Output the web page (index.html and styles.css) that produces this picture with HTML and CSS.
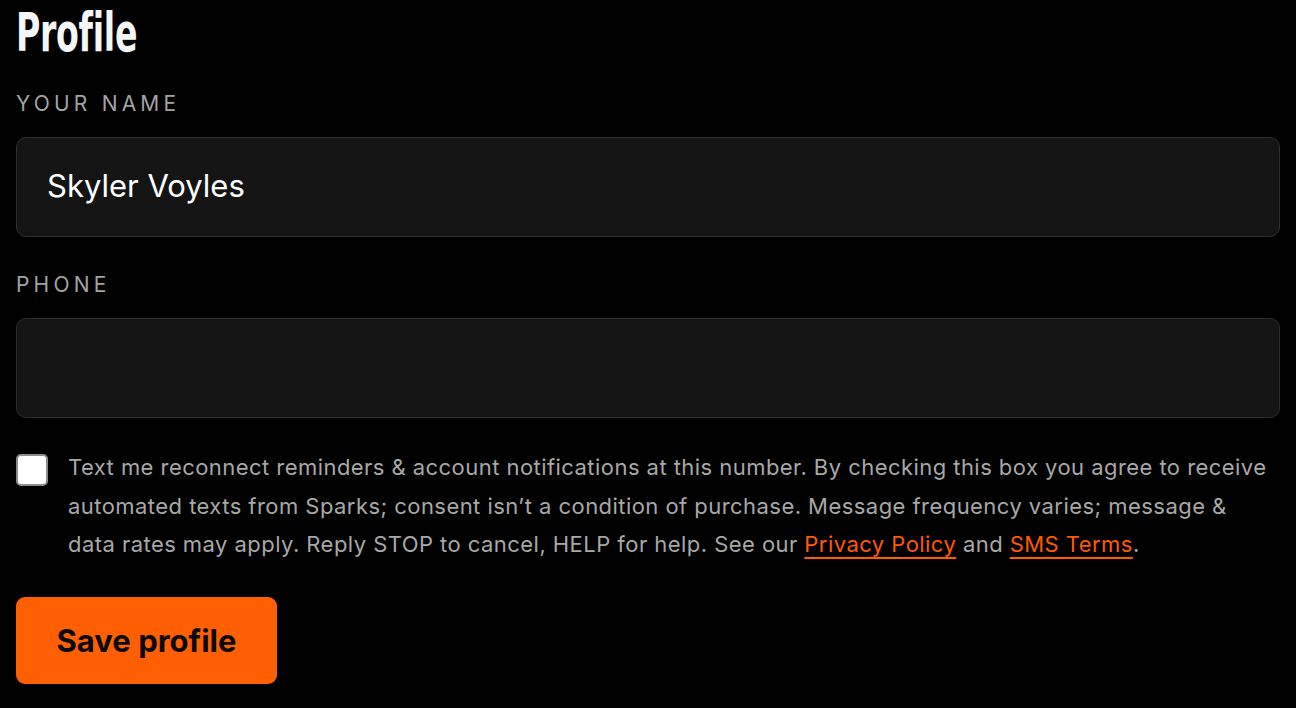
FILE: index.html
```html
<!DOCTYPE html>
<html lang="en">
<head>
<meta charset="utf-8">
<title>Profile</title>
<link rel="stylesheet" href="styles.css">
</head>
<body>
<main class="page">
  <h1 class="title"><span class="title-text">Profile</span></h1>
  <form class="form">
    <div class="field">
      <label class="label" for="name">Your name</label>
      <input class="input" id="name" type="text" value="Skyler Voyles">
    </div>
    <div class="field field--last">
      <label class="label" for="phone">Phone</label>
      <input class="input" id="phone" type="tel" value="">
    </div>
    <div class="consent">
      <input class="check" type="checkbox" id="sms">
      <label class="consent-text" for="sms">Text me reconnect reminders &amp; account notifications at this number. By checking this box you agree to receive automated texts from Sparks; consent isn’t a condition of purchase. Message frequency varies; message &amp; data rates may apply. Reply STOP to cancel, HELP for help. See our <a class="link" href="#">Privacy Policy</a> and <a class="link" href="#">SMS Terms</a>.</label>
    </div>
    <div class="actions">
      <button class="btn" type="button">Save profile</button>
    </div>
  </form>
</main>
</body>
</html>
```
FILE: styles.css
```css
html, body {
  margin: 0;
  padding: 0;
  background: #000;
}
body {
  font-family: Inter, "Liberation Sans", Arial, sans-serif;
  color: #fff;
}
.page {
  padding: 6px 16px 0 16px;
}
.title {
  margin: 0;
  font-family: "DejaVu Sans", "Liberation Sans", sans-serif;
  font-weight: 700;
  font-size: 54px;
  line-height: 54px;
  color: #f4f6f8;
}
.title-text {
  display: inline-block;
  transform: scaleX(0.615);
  transform-origin: 0 50%;
  letter-spacing: -0.5px;
}
.form {
  display: flex;
  flex-direction: column;
  margin-top: 32px;
}
.field {
  display: flex;
  flex-direction: column;
  gap: 21px;
  margin-bottom: 36px;
}
.field--last {
  margin-bottom: 30px;
}
.label {
  display: block;
  font-size: 21px;
  line-height: 24px;
  letter-spacing: 0.2em;
  text-transform: uppercase;
  color: #a3a3a3;
}
.input {
  box-sizing: border-box;
  width: 100%;
  height: 100px;
  margin: 0;
  padding: 0 30px 3px 30px;
  background: #141414;
  border: 1.5px solid #2f2f2f;
  border-radius: 10px;
  font-family: Inter, "Liberation Sans", sans-serif;
  font-size: 31px;
  color: #fff;
  outline: none;
}
.consent {
  display: flex;
  align-items: flex-start;
  gap: 20px;
}
.check {
  appearance: none;
  -webkit-appearance: none;
  flex: none;
  box-sizing: border-box;
  width: 32px;
  height: 32px;
  margin: 6px 0 0 0;
  background: #fff;
  border: 2px solid #8d8d8d;
  border-radius: 5px;
}
.consent-text {
  font-size: 22px;
  line-height: 38.5px;
  letter-spacing: 0.45px;
  color: #a8a8a8;
}
.link {
  color: #ff5a00;
  text-decoration: underline;
  text-decoration-thickness: 2px;
  text-underline-offset: 5px;
}
.actions {
  margin-top: 33px;
}
.btn {
  box-sizing: border-box;
  width: 261px;
  height: 87px;
  border: none;
  border-radius: 9px;
  background: #ff5f00;
  color: #0a0a0a;
  font-family: Inter, "Liberation Sans", sans-serif;
  font-weight: 700;
  font-size: 31px;
  cursor: pointer;
}
```
